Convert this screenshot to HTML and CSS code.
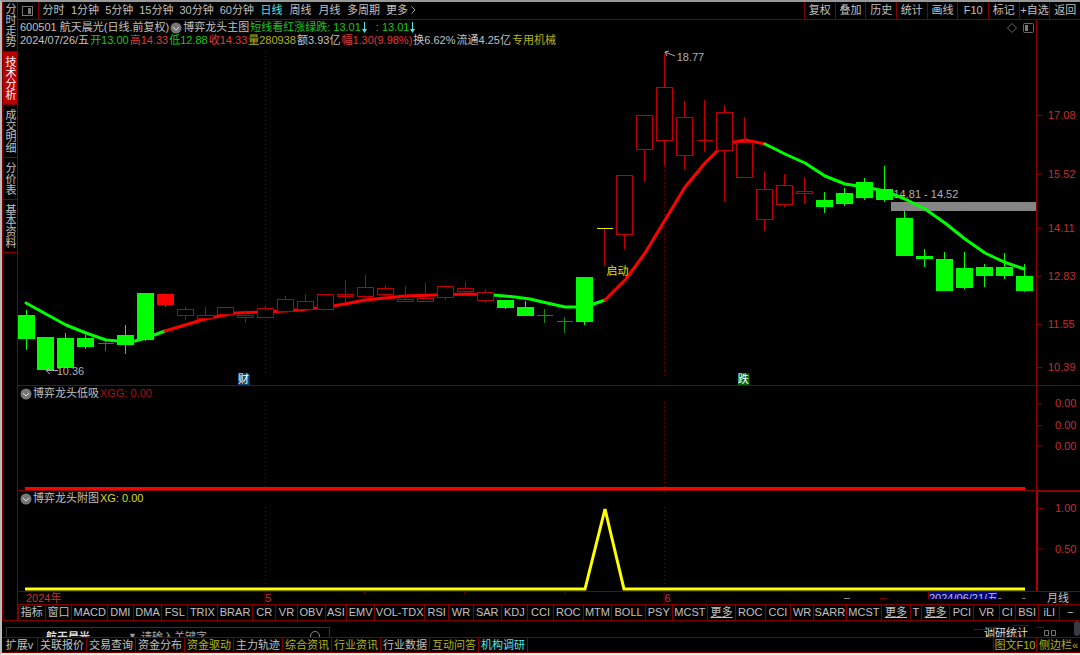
FILE: index.html
```
<!DOCTYPE html>
<html lang="zh-CN">
<head>
    <meta charset="UTF-8">
    <meta name="viewport" content="width=device-width, initial-scale=1.0">
    <title>航天晨光 600501</title>
    <link rel="stylesheet" href="styles.css">
</head>
<body>
    <div class="app">
        <div class="workspace">
            <nav class="sidebar">
                <button class="side-tab">分时走势</button>
                <button class="side-tab active">技术分析</button>
                <button class="side-tab">成交明细</button>
                <button class="side-tab">分价表</button>
                <button class="side-tab">基本资料</button>
            </nav>

            <main class="content">
                <div class="toolbar">
                    <button class="layout-button" aria-label="布局">
                        <svg width="11" height="10"><rect x="0.5" y="0.5" width="10" height="9" fill="none" stroke="#777"/><rect x="6" y="2" width="3" height="6" fill="#777"/></svg>
                    </button>
                    <div class="periods">
                        <button class="short">分时</button>
                        <button>1分钟</button>
                        <button>5分钟</button>
                        <button>15分钟</button>
                        <button>30分钟</button>
                        <button>60分钟</button>
                        <button class="short current">日线</button>
                        <button class="short">周线</button>
                        <button class="short">月线</button>
                        <button>多周期</button>
                        <button>更多 <svg width="5" height="8"><path d="M0.5 0.5 L4 4 L0.5 7.5" fill="none" stroke="#aaa"/></svg></button>
                    </div>
                    <div class="tools">
                        <button>复权</button>
                        <button>叠加</button>
                        <button>历史</button>
                        <button>统计</button>
                        <button>画线</button>
                        <button>F10</button>
                        <button>标记</button>
                        <button>+自选</button>
                        <button>返回</button>
                    </div>
                </div>

                <!-- K line -->
                <section class="panel">
                    <div class="plot">
                        <div class="info">
                            <div class="info-row">
                                <span>600501 航天晨光(日线.前复权)</span>
                                <svg class="fold" width="12" height="12"><circle cx="6" cy="6" r="5.5"/><path d="M3 5 L6 8 L9 5"/></svg>
                                <span>博弈龙头主图</span>
                                <span class="green">短线看红涨绿跌: 13.01</span>
                                <svg class="down" width="5" height="12"><path d="M2.5 0 V8"/><path class="head" d="M0 7 H5 L2.5 11 Z"/></svg>
                                <span class="green second">: 13.01</span>
                                <svg class="down" width="5" height="12"><path d="M2.5 0 V8"/><path class="head" d="M0 7 H5 L2.5 11 Z"/></svg>
                                <span class="corner">
                                    <svg width="10" height="10"><path d="M5 0.5 L9.5 5 L5 9.5 L0.5 5 Z" fill="none" stroke="#666"/></svg>
                                    <svg width="11" height="10"><rect x="0.5" y="0.5" width="10" height="9" rx="1" fill="none" stroke="#666"/><rect x="2" y="2" width="3" height="6" fill="#777"/></svg>
                                </span>
                            </div>
                            <div class="info-row quote">
                                <span>2024/07/26/五</span>
                                <span class="green">开13.00</span>
                                <span class="red">高14.33</span>
                                <span class="green">低12.88</span>
                                <span class="red">收14.33</span>
                                <span class="yellow">量280938</span>
                                <span>额3.93亿</span>
                                <span class="red">幅1.30(9.98%)</span>
                                <span>换6.62%</span>
                                <span>流通4.25亿</span>
                                <span class="yellow">专用机械</span>
                            </div>
                        </div>
                        <svg class="chart">
                            <text class="note" x="86%" y="44.8%">14.81 - 14.52</text>
                            <svg viewBox="18 47 1018 338" preserveAspectRatio="none" width="100%" height="100%">
                                <path class="month-line" d="M265.5 52 V376 M664.5 166 V376"/>
                                <rect x="891" y="202" width="145" height="9" fill="#858585"/>
                                <g id="averages"></g>
                                <g id="candles"></g>
                                <path class="arrow" d="M58 370.5 H46 M50 367 L46 370.5 L50 374 M675 56 L665 52 M669 51 L665 52 L667 56"/>
                                <path d="M597 228.5 H613" stroke="#e8e800"/>
                            </svg>
                            <text class="note" x="3.8%" y="97%">10.36</text>
                            <text class="note" x="64.7%" y="4.1%">18.77</text>
                            <text class="start" x="57.8%" y="67.6%">启动</text>
                            <svg x="21.6%" y="96.5%" width="12" height="12"><rect width="12" height="12" fill="#12426f"/><text class="mark" x="0" y="10">财</text></svg>
                            <svg x="70.7%" y="96.5%" width="12" height="12"><rect width="12" height="12" fill="#0a640a"/><text class="mark" x="0" y="10">跌</text></svg>
                        </svg>
                    </div>
                    <svg class="axis">
                        <svg y="24.1%" height="14"><path d="M0 7.5 H5"/><text x="11" y="11">17.08</text></svg>
                        <svg y="40.2%" height="14"><path d="M0 7.5 H5"/><text x="11" y="11">15.52</text></svg>
                        <svg y="55%" height="14"><path d="M0 7.5 H5"/><text x="11" y="11">14.11</text></svg>
                        <svg y="68.1%" height="14"><path d="M0 7.5 H5"/><text x="11" y="11">12.83</text></svg>
                        <svg y="81.4%" height="14"><path d="M0 7.5 H5"/><text x="11" y="11">11.55</text></svg>
                        <svg y="93.2%" height="14"><path d="M0 7.5 H5"/><text x="11" y="11">10.39</text></svg>
                    </svg>
                </section>

                <section class="panel">
                    <div class="plot">
                        <div class="info">
                            <div class="info-row">
                                <svg class="fold" width="12" height="12"><circle cx="6" cy="6" r="5.5"/><path d="M3 5 L6 8 L9 5"/></svg>
                                <span>博弈龙头低吸</span>
                                <span class="dark-red">XGG: 0.00</span>
                            </div>
                        </div>
                        <svg class="chart" viewBox="18 400 1018 90" preserveAspectRatio="none">
                            <path class="month-line" d="M265.5 402 V488 M664.5 402 V488"/>
                            <path d="M25 488.5 H1025" stroke="#f00" stroke-width="3"/>
                        </svg>
                    </div>
                    <svg class="axis">
                        <svg y="10%" height="14"><path d="M0 7.5 H5"/><text x="18" y="11">0.00</text></svg>
                        <svg y="31%" height="14"><path d="M0 7.5 H5"/><text x="18" y="11">0.00</text></svg>
                        <svg y="50.5%" height="14"><path d="M0 7.5 H5"/><text x="18" y="11">0.00</text></svg>
                    </svg>
                </section>

                <section class="panel last">
                    <div class="plot">
                        <div class="info">
                            <div class="info-row">
                                <svg class="fold" width="12" height="12"><circle cx="6" cy="6" r="5.5"/><path d="M3 5 L6 8 L9 5"/></svg>
                                <span>博弈龙头附图</span>
                                <span class="light-yellow">XG: 0.00</span>
                            </div>
                        </div>
                        <svg class="chart" viewBox="18 505 1018 86" preserveAspectRatio="none">
                            <path class="month-line" d="M265.5 507 V588 M664.5 507 V588"/>
                            <path d="M25 589 H585 L605 509 L624 589 H1025" fill="none" stroke="#ff0" stroke-width="3"/>
                        </svg>
                    </div>
                    <svg class="axis">
                        <svg y="9%" height="14"><path d="M0 7.5 H5"/><text x="17" y="11">1.00</text></svg>
                        <svg y="50%" height="14"><path d="M0 7.5 H5"/><text x="17" y="11">0.50</text></svg>
                    </svg>
                </section>

                <div class="timeline">
                    <svg class="dates">
                        <text x="8" y="10">2024年</text>
                        <svg x="24.2%"><path d="M0.5 0 V12"/><text x="1" y="10">5</text></svg>
                        <svg x="63.4%"><path d="M0.5 0 V12"/><text x="1" y="10">6</text></svg>
                        <svg x="34%"><path d="M0.5 0 V2"/></svg>
                        <svg x="43.8%"><path d="M0.5 0 V2"/></svg>
                        <svg x="53.7%"><path d="M0.5 0 V2"/></svg>
                        <svg x="77.5%"><path class="grey" d="M37 6.5 H43"/><path d="M73 6.5 H80"/></svg>
                        <svg x="96.3%"><path class="grey" d="M0 6.5 H3 M24 6.5 H27 M38 4.5 L41 7.5"/></svg>
                    </svg>
                    <span class="cursor-date">2024/06/21/五</span>
                    <span class="scale">月线</span>
                </div>

                <div class="indicators">
                    <button>指标</button><button>窗口</button><button>MACD</button><button>DMI</button><button>DMA</button><button>FSL</button><button>TRIX</button><button>BRAR</button><button>CR</button><button>VR</button><button>OBV</button><button>ASI</button><button>EMV</button><button>VOL-TDX</button><button>RSI</button><button>WR</button><button>SAR</button><button>KDJ</button><button>CCI</button><button>ROC</button><button>MTM</button><button>BOLL</button><button>PSY</button><button>MCST</button><button class="more">更多</button><button>ROC</button><button>CCI</button><button>WR</button><button>SARR</button><button>MCST</button><button class="more">更多</button><button>T</button><button class="more">更多</button><button>PCI</button><button>VR</button><button>CI</button><button>BSI</button><button>iLI</button><button>−</button>
                </div>
            </main>
        </div>

        <div class="strip">
            <form class="search">
                <select aria-label="股票"><option>航天晨光</option></select>
                <span class="caret">▼</span>
                <input type="text" placeholder="请输入关键字" aria-label="关键字">
                <svg width="14" height="14"><circle cx="6" cy="6" r="4.5" fill="none" stroke="#888"/><path d="M9 9 L13 13" stroke="#888"/></svg>
            </form>
            <span class="stats">调研统计</span>
            <svg class="boxes" width="13" height="6"><path d="M0.5 0.5 H4.5 V5.5 H0.5 Z M7.5 0.5 H11.5 V5.5 H7.5 Z" fill="none" stroke="#777"/></svg>
            <span class="thumb"></span>
            <svg class="marks" width="72" height="6"><path d="M0 5.5 H12 M12 3.5 H26 M39 1.5 H55 M62 3.5 H70" stroke="#800000"/></svg>
        </div>

        <footer class="bottom-bar">
            <button class="expand">扩展v</button>
            <button>关联报价</button>
            <button>交易查询</button>
            <button>资金分布</button>
            <button class="yellow">资金驱动</button>
            <button>主力轨迹</button>
            <button class="yellow">综合资讯</button>
            <button class="yellow">行业资讯</button>
            <button>行业数据</button>
            <button class="yellow">互动问答</button>
            <button class="cyan">机构调研</button>
            <button class="yellow f10">图文F10</button>
            <button class="yellow side">侧边栏«</button>
        </footer>
    </div>
    <script src="chart.js"></script>
</body>
</html>
```
FILE: styles.css
```
* {
    box-sizing: border-box;
}
body {
    margin: 0;
    background-color: #000;
    color: #c0c0c0;
    font: 11px/13px "Liberation Sans", "Noto Sans CJK SC", sans-serif;
}
button {
    margin: 0;
    padding: 0;
    border: 0;
    background: none;
    color: inherit;
    font: inherit;
    white-space: nowrap;
    cursor: pointer;
}
svg {
    display: block;
}
.app {
    display: flex;
    flex-direction: column;
    height: 100vh;
    overflow: hidden;
    border-top: 2px solid #999;
    border-left: 2px solid #bbb;
    border-bottom: 2px solid #eee;
}
.workspace {
    flex: 1;
    display: flex;
    min-height: 0;
}

/* Left tabs */
.sidebar {
    width: 16px;
    border: 1px solid #800000;
    border-top: 0;
}
.side-tab {
    display: block;
    width: 100%;
    padding: 4px 0;
    border-bottom: 1px solid #800000;
    line-height: 14px;
    writing-mode: vertical-rl;
}
.side-tab:first-child {
    padding-top: 1px;
}
.side-tab.active {
    background-color: #b80000;
    color: #fff;
}

.content {
    flex: 1;
    min-width: 0;
    display: grid;
    grid-template-rows: 18px 366fr 105fr 101fr 13px 16px;
}

/* Top toolbar */
.toolbar {
    display: flex;
    border-bottom: 1px solid #800000;
}
.layout-button {
    width: 21px;
    padding-left: 4px;
    border-right: 1px solid #800000;
}
.periods {
    display: flex;
    gap: 6px;
    padding-left: 3px;
}
.periods .short {
    width: 23px;
}
.periods svg {
    display: inline-block;
}
.current,
.cyan {
    color: #54e6e6;
}
.tools {
    display: grid;
    grid-template-columns: repeat(9, 1fr);
    width: 276px;
    margin-left: auto;
}
.tools button {
    border-left: 1px solid #800000;
}

/* Chart panels */
.panel {
    display: flex;
    min-height: 0;
    border-bottom: 1px solid #800000;
}
.plot {
    flex: 1;
    display: flex;
    flex-direction: column;
    min-width: 0;
}
.info {
    padding: 1px 2px 0;
}
.info-row {
    display: flex;
    align-items: center;
    gap: 1px;
    height: 13px;
    white-space: nowrap;
}
.fold circle {
    fill: #777;
}
.fold path {
    fill: none;
    stroke: #ddd;
}
.down path {
    stroke: #54e6e6;
}
.down .head {
    fill: #54e6e6;
    stroke: none;
}
.second {
    padding-left: 8px;
}
.corner {
    display: flex;
    gap: 6px;
    margin-left: auto;
}
.green {
    color: #18c818;
}
.red {
    color: #e03838;
}
.dark-red {
    color: #b01010;
}
.yellow {
    color: #b4b41c;
}
.light-yellow {
    color: #d8d830;
}
.chart {
    flex: 1;
    width: 100%;
    min-height: 0;
}
.chart text {
    font-size: 11px;
}
.chart .note {
    fill: #b0b0b0;
}
.chart .start {
    fill: #e0e010;
}
.chart .mark {
    fill: #fff;
}
.month-line {
    stroke: #800000;
    stroke-dasharray: 1 3;
    shape-rendering: crispEdges;
}
.arrow {
    fill: none;
    stroke: #aaa;
}
.average {
    fill: none;
    stroke-width: 3;
    stroke-linejoin: round;
    stroke-linecap: round;
}
.candle {
    shape-rendering: crispEdges;
}
.up {
    fill: #000;
    stroke: #c00000;
}
.up-solid {
    fill: #f00;
    stroke: #f00;
}
.fall {
    fill: #0f0;
    stroke: #0f0;
}
.doji {
    stroke: #109010;
}
.axis {
    width: 44px;
    height: 100%;
    border-left: 1px solid #900000;
}
.axis path {
    stroke: #900000;
}
.axis text {
    fill: #c03030;
}
.last .axis {
    border-left: 2px solid #b00000;
    border-top: 1px solid #b00000;
}

/* Dates under the charts */
.timeline {
    display: flex;
    overflow: hidden;
    border-bottom: 1px solid #800000;
}
.dates {
    flex: 1;
    height: 12px;
    margin-right: -108px;
}
.dates path {
    stroke: #800000;
}
.dates .grey {
    stroke: #888;
}
.dates text {
    fill: #c83232;
}
.cursor-date {
    width: 69px;
    height: 7px;
    margin-right: 50px;
    overflow: hidden;
    background-color: #000080;
    border-left: 1px solid #800000;
    white-space: nowrap;
    line-height: 12px;
}
.scale {
    width: 33px;
}

.indicators {
    display: grid;
    grid-template-columns: 27fr 27fr 36fr 26fr 29fr 26fr 30fr 36fr 23fr 22fr 28fr 22fr 28fr 51fr 24fr 25fr 28fr 27fr 26fr 30fr 29fr 34fr 27fr 36fr 28fr 30fr 26fr 23fr 33fr 36fr 29fr 11fr 29fr 24fr 26fr 16fr 24fr 21fr 21fr;
    border-bottom: 1px solid #800000;
}
.indicators button {
    min-width: 0;
    overflow: hidden;
    border-left: 1px solid #800000;
}
.more {
    text-decoration: underline;
}

/* Strip half covered by the bottom bar */
.strip {
    position: relative;
    display: flex;
    height: 16px;
    overflow: hidden;
}
.search {
    display: flex;
    width: 324px;
    height: 24px;
    margin: 6px 0 0 4px;
    padding: 2px 6px 0 39px;
    border: 1px solid #333;
}
.search select {
    appearance: none;
    width: 82px;
    height: 14px;
    padding: 0;
    border: 0;
    background: none;
    color: #ddd;
    font: inherit;
    font-weight: bold;
}
.caret {
    width: 13px;
    color: #999;
    font-size: 9px;
}
.search input {
    flex: 1;
    min-width: 0;
    height: 14px;
    padding: 0;
    border: 0;
    background: none;
    color: #aaa;
    font: inherit;
}
.search input::placeholder {
    color: #aaa;
}
.stats {
    margin: 6px 16px 0 auto;
    color: #ddd;
}
.boxes {
    margin: 9px 17px 0 0;
}
.thumb {
    width: 6px;
    height: 15px;
    border-radius: 3px;
    background-color: #3a3a44;
}
.marks {
    position: absolute;
    top: 3px;
    right: 34px;
}

.bottom-bar {
    display: flex;
    height: 16px;
    border-top: 1px solid #800000;
    border-bottom: 1px solid #800000;
}
.bottom-bar button {
    width: 49px;
    border-right: 1px solid #800000;
}
.bottom-bar .expand {
    width: 36px;
}
.bottom-bar .f10 {
    width: 44px;
    margin-left: auto;
    border-left: 1px solid #800000;
}
.bottom-bar .side {
    width: 43px;
    border-right: 0;
}
```
FILE: chart.js
```
// [kind, body top, body bottom, wick top, wick bottom]
const candles = [
    ['fall', 315, 338, 310, 350],
    ['fall', 337, 369, 337, 369],
    ['fall', 338, 367, 333, 367],
    ['fall', 338, 346, 335, 349],
    ['doji', 343, 343, 341, 351],
    ['fall', 335, 344, 325, 354],
    ['fall', 293, 339, 293, 341],
    ['up-solid', 294, 304, 294, 307],
    ['up', 309, 315, 307, 320],
    ['up', 315, 318, 307, 318],
    ['up', 307, 314, 307, 314],
    ['up', 315, 317, 310, 323],
    ['up', 308, 317, 306, 318],
    ['up', 299, 311, 296, 311],
    ['up', 301, 309, 294, 309],
    ['up', 294, 309, 294, 309],
    ['up', 294, 296, 280, 302],
    ['up', 287, 296, 275, 303],
    ['up', 288, 294, 285, 298],
    ['up', 299, 301, 286, 301],
    ['up', 298, 301, 283, 301],
    ['up', 286, 297, 285, 300],
    ['up', 288, 291, 282, 293],
    ['up', 292, 300, 289, 303],
    ['fall', 300, 307, 300, 309],
    ['fall', 307, 315, 301, 315],
    ['doji', 315, 315, 309, 323],
    ['doji', 321, 321, 317, 333],
    ['fall', 277, 321, 277, 325],
    ['up', 228, 228, 228, 266],
    ['up', 175, 234, 175, 249],
    ['up', 115, 149, 115, 182],
    ['up', 87, 140, 54, 165],
    ['up', 117, 155, 101, 170],
    ['up', 140, 140, 100, 152],
    ['up', 112, 150, 105, 202],
    ['up', 142, 177, 117, 177],
    ['up', 189, 219, 171, 231],
    ['up', 185, 204, 174, 207],
    ['up', 191, 193, 177, 204],
    ['fall', 200, 206, 192, 213],
    ['fall', 193, 203, 188, 206],
    ['fall', 182, 197, 178, 200],
    ['fall', 189, 199, 166, 202],
    ['fall', 218, 255, 211, 255],
    ['fall', 256, 258, 249, 267],
    ['fall', 259, 290, 252, 290],
    ['fall', 268, 287, 252, 289],
    ['fall', 267, 275, 264, 287],
    ['fall', 267, 275, 253, 279],
    ['fall', 276, 290, 264, 292]
];

const averages = [
    ['#0f0', '26,303 46,314 66,325 86,333 106,340 118,341 135,341 146,338 165,331'],
    ['#f00', '165,331 205,319 235,313 262,312 285,311 318,308 333,306 350,303 365,300 385,298 405,296 435,295 470,294 493,295'],
    ['#0f0', '493,295 515,297 530,299 547,303 565,307 585,307 605,300'],
    ['#f00', '605,300 626,279 645,253 665,220 685,187 705,163 717,151 730,143 745,140 765,144'],
    ['#0f0', '765,144 785,154 805,163 825,176 845,184 865,187 885,191 905,199 925,209 945,223 965,239 985,253 1004,262 1024,269']
];

function addShape(parent, name, attributes) {
    const shape = document.createElementNS('http://www.w3.org/2000/svg', name);
    for (const key in attributes) {
        shape.setAttribute(key, attributes[key]);
    }
    parent.appendChild(shape);
}

const averageGroup = document.getElementById('averages');
averages.forEach(function([color, points]) {
    addShape(averageGroup, 'polyline', { class: 'average', stroke: color, points: points });
});

const candleGroup = document.getElementById('candles');
candles.forEach(function([kind, top, bottom, high, low], i) {
    const x = Math.round(25.5 + i * 19.96) + 0.5;
    const className = 'candle ' + kind;
    addShape(candleGroup, 'path', { class: className, d: `M${x} ${high} V${low}` });
    if (top === bottom) {
        addShape(candleGroup, 'path', { class: className, d: `M${x - 8} ${top + 0.5} H${x + 8}` });
    } else {
        addShape(candleGroup, 'rect', { class: className, x: x - 8, y: top + 0.5, width: 16, height: bottom - top });
    }
});
```
